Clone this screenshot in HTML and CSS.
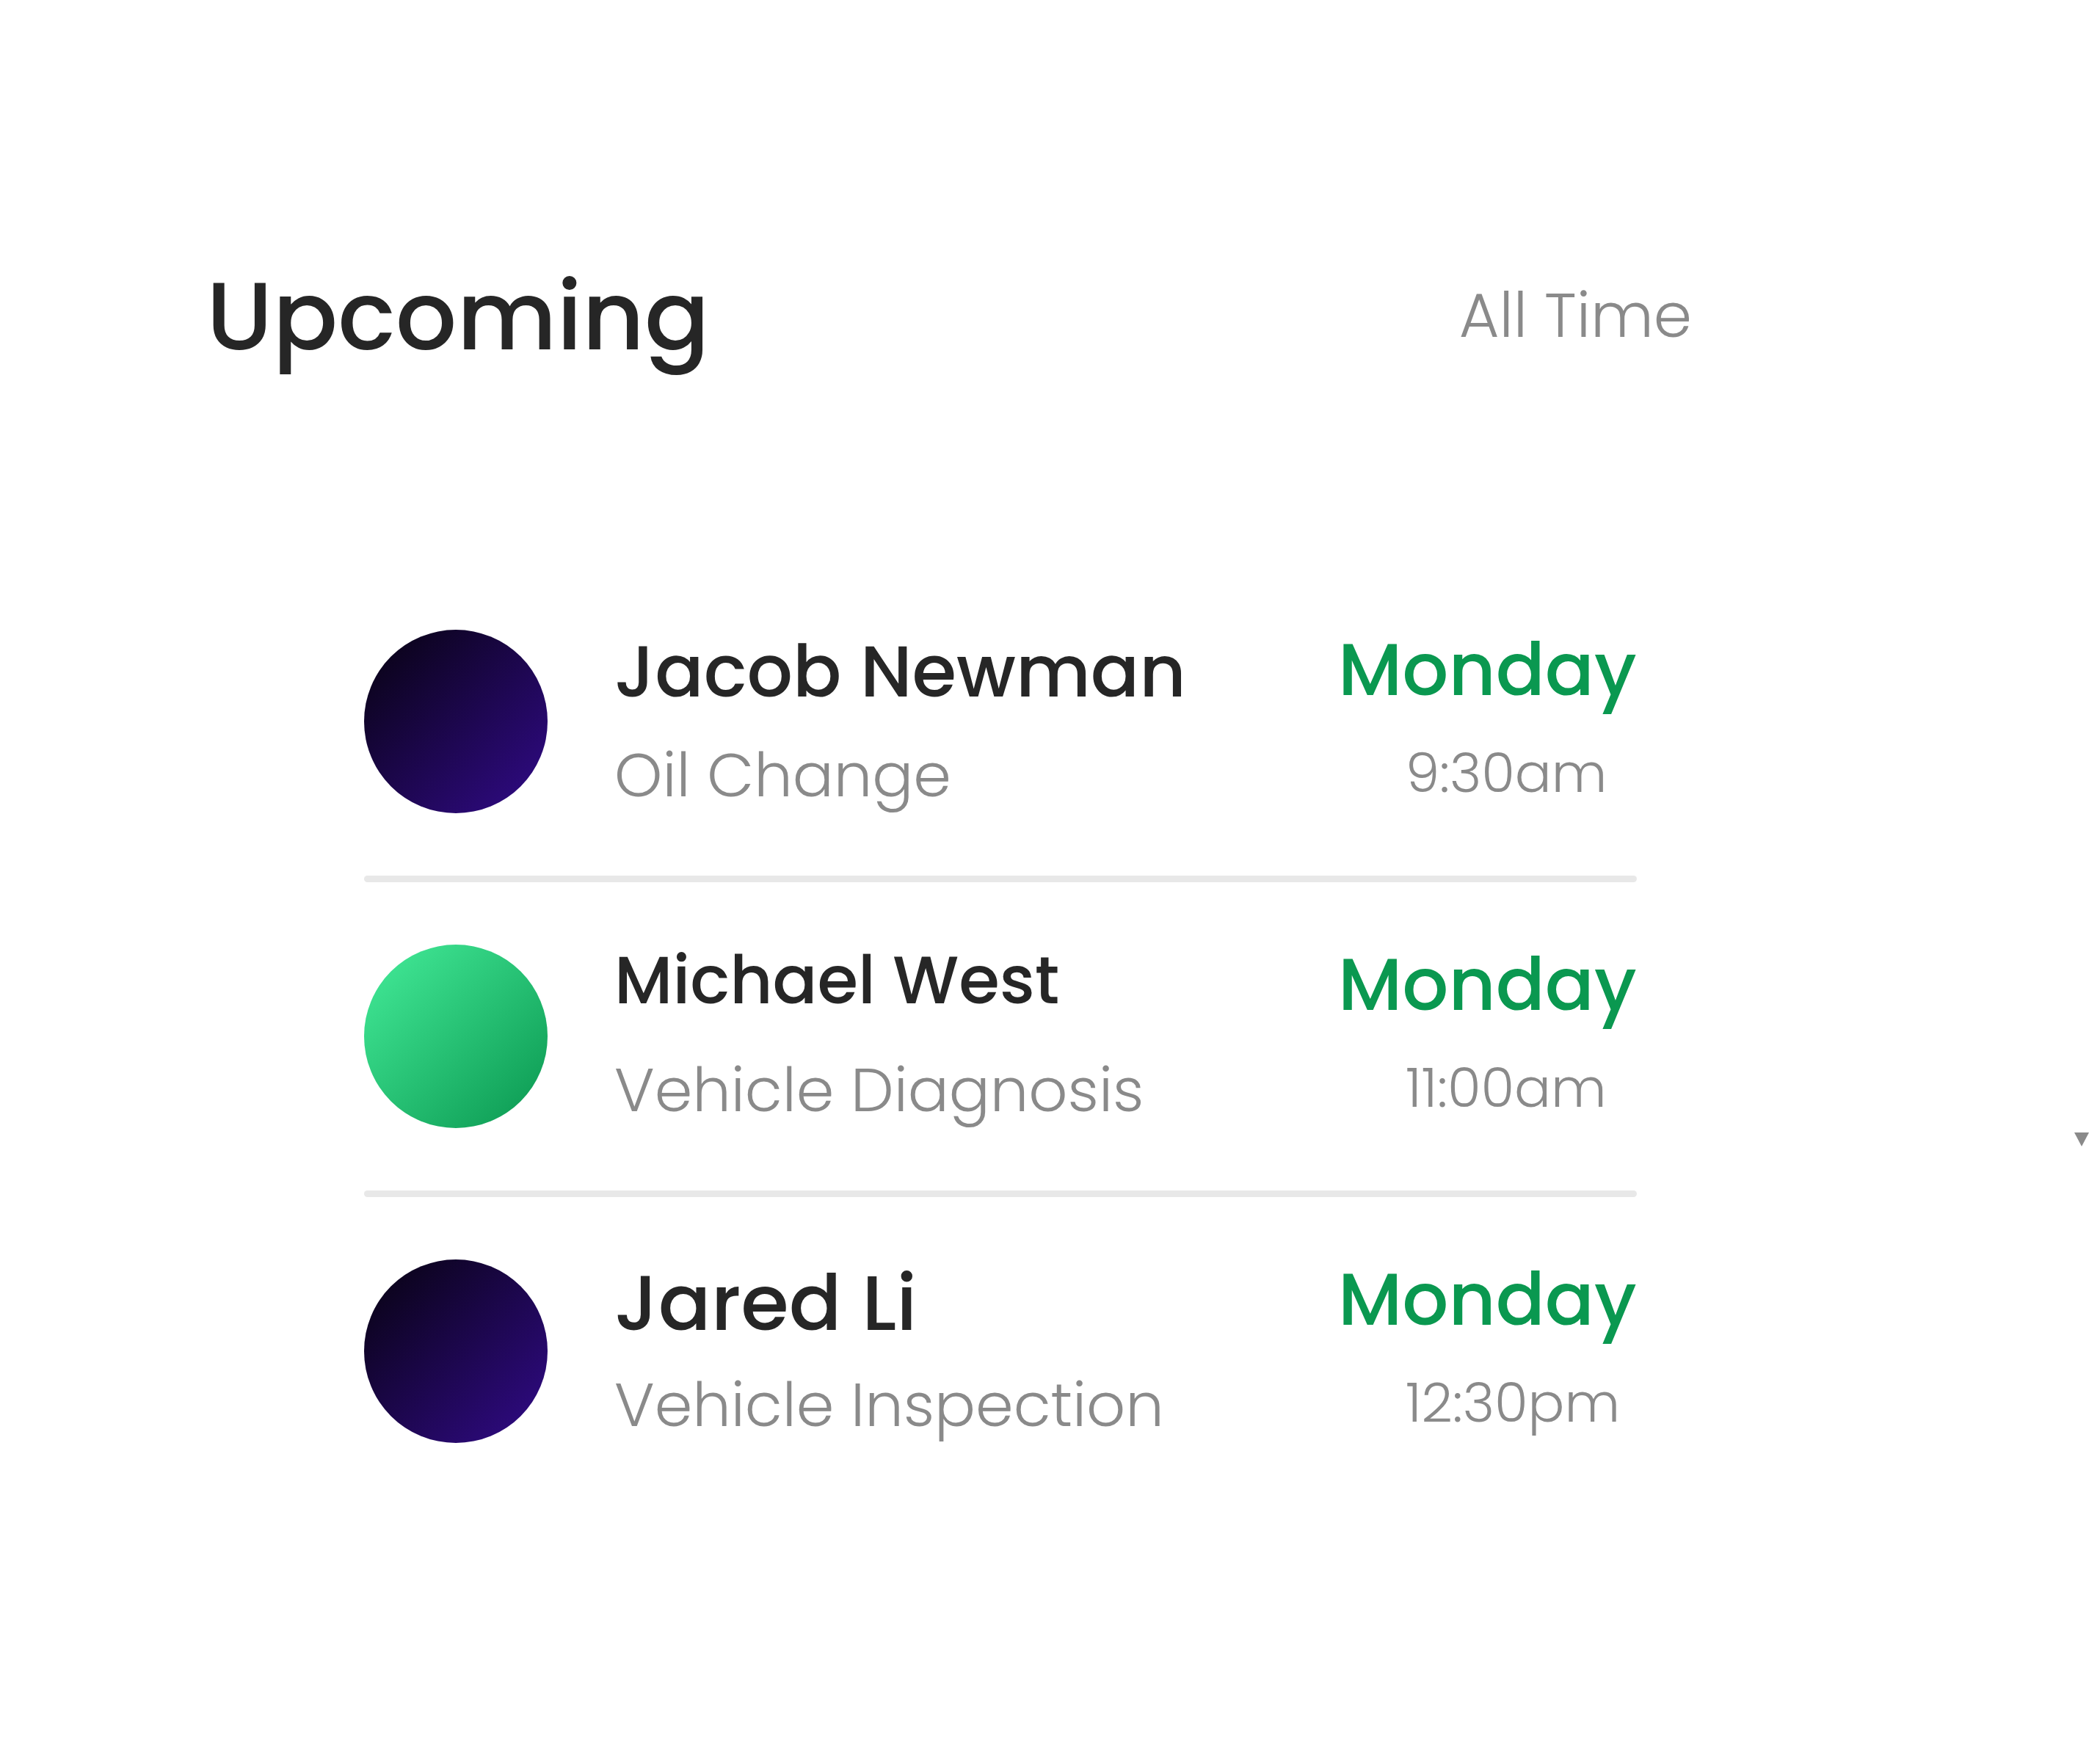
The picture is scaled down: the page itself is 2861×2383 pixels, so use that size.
FILE: index.html
```html
<!DOCTYPE html>
<html lang="en">
<head>
  <meta charset="UTF-8" />
  <meta name="viewport" content="width=device-width, initial-scale=1.0"/>
  <title>Upcoming</title>
  <link rel="stylesheet" href="styles.css">
</head>
<body>

<div class="card">
  <div class="card-header">
    <h2 class="title">Upcoming</h2>
    <span class="range">All Time</span>
  </div>

  <div class="list">
    <div class="item">
      <div class="avatar avatar-purple"></div>
      <div class="info">
        <div class="name">Jacob Newman</div>
        <div class="service">Oil Change</div>
      </div>
      <div class="when">
        <div class="day">Monday</div>
        <div class="time">9:30am</div>
      </div>
    </div>

    <div class="divider"></div>

    <div class="item">
      <div class="avatar avatar-green"></div>
      <div class="info">
        <div class="name name-sm">Michael West</div>
        <div class="service">Vehicle Diagnosis</div>
      </div>
      <div class="when">
        <div class="day">Monday</div>
        <div class="time">11:00am</div>
      </div>
    </div>

    <div class="divider"></div>

    <div class="item">
      <div class="avatar avatar-purple"></div>
      <div class="info">
        <div class="name name-lg">Jared Li</div>
        <div class="service">Vehicle Inspection</div>
      </div>
      <div class="when">
        <div class="day">Monday</div>
        <div class="time">12:30pm</div>
      </div>
    </div>
  </div>
</div>

<span class="caret"></span>

</body>
</html>
```

FILE: styles.css
```css
body {
  margin: 0;
  background: #fff;
  font-family: "Poppins", "Inter", sans-serif;
  color: #262626;
}

.card {
  width: 2024px;
  padding: 350px 0 0 281px;
}

.card-header {
  display: flex;
  justify-content: space-between;
  align-items: flex-start;
}

.title {
  margin: 0;
  font-size: 131px;
  font-weight: 500;
  line-height: 160px;
}

.range {
  font-size: 84px;
  font-weight: 300;
  line-height: 160px;
  color: #8a8a8a;
}

.list {
  margin: 263px 75px 0 215px;
}

.item {
  display: flex;
  align-items: flex-start;
  padding: 85px 0;
}

.avatar {
  flex: none;
  width: 250px;
  height: 250px;
  border-radius: 50%;
}

.avatar-purple {
  background: linear-gradient(135deg, #0a0318 8%, #2e0a80 92%);
}

.avatar-green {
  background: linear-gradient(135deg, #40e694 8%, #0e9d55 92%);
}

.info {
  margin-left: 91px;
}

.name {
  height: 114px;
  font-size: 98px;
  font-weight: 500;
  line-height: 113px;
  white-space: nowrap;
}

.name-sm {
  font-size: 90px;
  line-height: 97px;
}

.name-lg {
  font-size: 106px;
  line-height: 118px;
}

.service {
  margin-top: 34px;
  font-size: 83px;
  font-weight: 300;
  line-height: 100px;
  color: #8a8a8a;
  white-space: nowrap;
}

.when {
  margin-left: auto;
  width: 407px;
}

.day {
  font-size: 99px;
  font-weight: 500;
  line-height: 109px;
  color: #0a9850;
}

.time {
  margin-top: 36px;
  padding-left: 92px;
  font-size: 74px;
  font-weight: 300;
  line-height: 100px;
  color: #8a8a8a;
}

.divider {
  height: 9px;
  border-radius: 5px;
  background: #e8e8e8;
}

.caret {
  position: absolute;
  left: 2826px;
  top: 1543px;
  width: 0;
  height: 0;
  border-left: 10px solid transparent;
  border-right: 10px solid transparent;
  border-top: 19px solid #8a8a8a;
}
```
